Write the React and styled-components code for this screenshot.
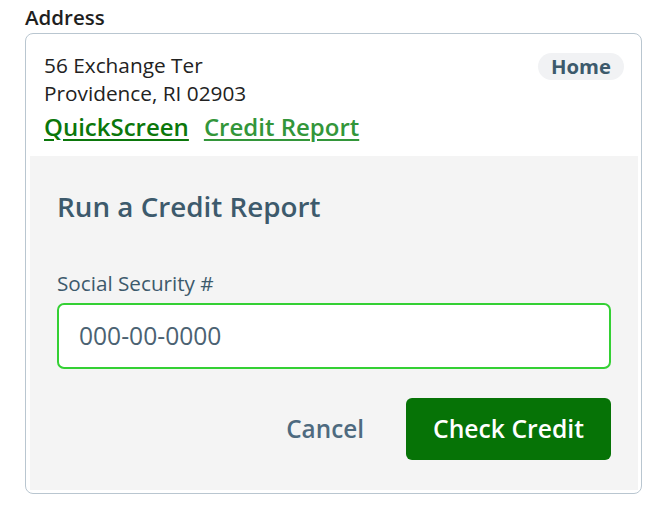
import React from "react";
import styled, { createGlobalStyle } from "styled-components";

const GlobalStyle = createGlobalStyle`
  body {
    margin: 0;
    background: #ffffff;
    font-family: "Open Sans", "Noto Sans", sans-serif;
  }
`;

const Page = styled.div`
  padding: 5px 28px 0 25px;
  width: 617px;
`;

const SectionLabel = styled.div`
  font-size: 20.5px;
  font-weight: 600;
  color: #1f1f1f;
  line-height: 24px;
  margin-bottom: 4px;
`;

const Card = styled.div`
  border: 1.5px solid #b9c6d0;
  border-radius: 8px;
  padding: 4px 3px 3px 4px;
  background: #ffffff;
`;

const AddressRow = styled.div`
  display: flex;
  justify-content: space-between;
  align-items: flex-start;
  padding: 12.5px 14px 15px 14px;
`;

const AddressText = styled.div`
  font-size: 20.8px;
  line-height: 28px;
  color: #222222;
`;

const Links = styled.div`
  display: flex;
  gap: 15px;
  margin-top: 6px;
`;

const TextLink = styled.a`
  font-size: 24px;
  line-height: 28px;
  font-weight: 600;
  color: ${(p) => (p.$strong ? "#0b770b" : "#33963a")};
  text-decoration: underline;
  text-underline-offset: 3px;
  text-decoration-thickness: 1.5px;
  cursor: pointer;
`;

const Badge = styled.span`
  background: #f1f2f4;
  color: #3d5a6c;
  font-size: 20.3px;
  font-weight: 700;
  line-height: 27px;
  padding: 0 13px;
  border-radius: 14px;
  margin-top: 2px;
`;

const Panel = styled.div`
  background: #f4f4f4;
  padding: 30px 27px 30px 27px;
`;

const PanelTitle = styled.h2`
  margin: 0;
  font-size: 27.8px;
  font-weight: 600;
  color: #3d5a6c;
  line-height: 40px;
`;

const FieldLabel = styled.label`
  display: block;
  margin-top: 44px;
  font-size: 20.7px;
  line-height: 26px;
  color: #3d5a6c;
`;

const Input = styled.input`
  display: block;
  box-sizing: border-box;
  width: 100%;
  height: 66px;
  margin-top: 7px;
  border: 2px solid #34d034;
  border-radius: 7px;
  background: #ffffff;
  padding: 0 20px;
  font-family: "Open Sans", "Noto Sans", sans-serif;
  font-size: 24.6px;
  color: #2a3f4d;
  outline: none;
  caret-color: #111;

  &::placeholder {
    color: #4b6272;
  }
`;

const Actions = styled.div`
  display: flex;
  justify-content: flex-end;
  align-items: center;
  gap: 42px;
  margin-top: 29px;
`;

const GhostButton = styled.button`
  border: none;
  background: transparent;
  font-family: "Open Sans", "Noto Sans", sans-serif;
  font-size: 24.3px;
  font-weight: 600;
  color: #4e6a7f;
  padding: 0;
  cursor: pointer;
`;

const PrimaryButton = styled.button`
  border: none;
  background: #067306;
  color: #ffffff;
  font-family: "Open Sans", "Noto Sans", sans-serif;
  font-size: 24.7px;
  font-weight: 600;
  height: 62px;
  width: 205px;
  border-radius: 6px;
  cursor: pointer;
`;

const App = () => {
  return (
    <>
      <GlobalStyle />
      <Page>
        <SectionLabel>Address</SectionLabel>
        <Card>
          <AddressRow>
            <div>
              <AddressText>
                56 Exchange Ter
                <br />
                Providence, RI 02903
              </AddressText>
              <Links>
                <TextLink $strong>QuickScreen</TextLink>
                <TextLink>Credit Report</TextLink>
              </Links>
            </div>
            <Badge>Home</Badge>
          </AddressRow>
          <Panel>
            <PanelTitle>Run a Credit Report</PanelTitle>
            <FieldLabel htmlFor="ssn">Social Security #</FieldLabel>
            <Input id="ssn" placeholder="000-00-0000" autoFocus />
            <Actions>
              <GhostButton>Cancel</GhostButton>
              <PrimaryButton>Check Credit</PrimaryButton>
            </Actions>
          </Panel>
        </Card>
      </Page>
    </>
  );
};

export default App;
